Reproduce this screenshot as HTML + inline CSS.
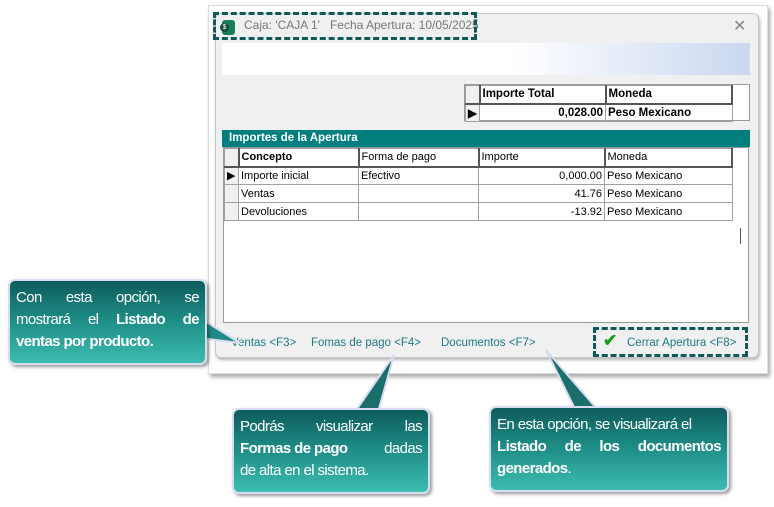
<!DOCTYPE html>
<html><head><style>
*{margin:0;padding:0;box-sizing:border-box}
body{width:774px;height:507px;background:#fff;position:relative;overflow:hidden;font-family:"Liberation Sans",Arial,sans-serif}
.abs{position:absolute}
.outer{left:208px;top:5px;width:560px;height:369px;background:#fff;border:1px solid #ddd;box-shadow:2px 3px 4px rgba(0,0,0,.35)}
.dlg{left:215px;top:13px;width:544px;height:345px;background:#f0f0f0;border:1px solid #c8c8c8;border-radius:6px;box-shadow:1px 2px 3px rgba(0,0,0,.3)}
.title{left:244px;top:18px;font-size:12px;color:#777}
.dash{border:3px dashed #0e5a5a}
.grad{left:222px;top:43px;width:528px;height:32px;background:linear-gradient(90deg,#fff 0%,#fff 55%,#c9d7ef 100%)}
table{border-collapse:collapse;font-size:11px}
td{border:1px solid #a0a0a0;height:18px;padding:0 2px;white-space:nowrap;overflow:hidden}
.hd td{border-bottom:2px solid #555;border-right:2px solid #555}
.ind{width:14px;background:#f0f0f0}
.r{text-align:right}
.call{color:#fff;font-size:15px;line-height:22px;padding:6px 6px;border-radius:7px;background:linear-gradient(180deg,#0d5c5c 0%,#1f8f88 50%,#3dbcb0 100%);border:2px solid #d8dcf0;box-shadow:2px 2px 3px rgba(0,0,0,.4);letter-spacing:-0.6px}
.call div{white-space:nowrap;display:flex;justify-content:space-between}
.call div.l{justify-content:flex-start}
.lk{font-size:11.5px;color:#1a7a86;top:337px}
</style></head><body>
<div class="abs outer"></div>
<div class="abs dlg"></div>
<div class="abs" style="left:222px;top:20px;width:13px;height:15px;background:#16805a;border-radius:3px"></div>
<div class="abs" style="left:220px;top:23px;width:9px;height:9px;background:#0b4d3a;border-radius:50%;color:#fff;font-size:7px;text-align:center;line-height:9px">$</div>
<div class="abs title">Caja: 'CAJA 1' &nbsp; Fecha Apertura: 10/05/2025</div>
<div class="abs dash" style="left:213px;top:12px;width:264px;height:28px"></div>
<div class="abs" style="left:733px;top:16px;font-size:16px;color:#888">✕</div>
<div class="abs grad"></div>
<div class="abs" style="left:464px;top:84px;width:286px;height:37px;background:#fff;border:1px solid #999"></div>
<table class="abs" style="left:465px;top:85px;width:268px;font-weight:bold;font-size:11.5px">
<tr class="hd"><td class="ind"></td><td style="width:126px">Importe Total</td><td>Moneda</td></tr>
<tr><td class="ind">▶</td><td class="r">0,028.00</td><td>Peso Mexicano</td></tr>
</table>
<div class="abs" style="left:222px;top:130px;width:528px;height:17px;background:#017f7f;color:#fff;font-size:11.5px;font-weight:bold;padding:2px 7px 0">Importes de la Apertura</div>
<div class="abs" style="left:223px;top:147px;width:526px;height:176px;background:#fff;border:1px solid #999"></div>
<div class="abs" style="left:740px;top:228px;width:1px;height:16px;background:#555"></div>
<table class="abs" style="left:224px;top:148px;width:509px">
<tr class="hd"><td class="ind"></td><td style="width:120px;font-weight:bold">Concepto</td><td style="width:120px">Forma de pago</td><td style="width:126px">Importe</td><td>Moneda</td></tr>
<tr><td class="ind">▶</td><td>Importe inicial</td><td>Efectivo</td><td class="r">0,000.00</td><td>Peso Mexicano</td></tr>
<tr><td class="ind"></td><td>Ventas</td><td></td><td class="r">41.76</td><td>Peso Mexicano</td></tr>
<tr><td class="ind"></td><td>Devoluciones</td><td></td><td class="r">-13.92</td><td>Peso Mexicano</td></tr>
</table>
<div class="abs lk" style="left:231px">Ventas &lt;F3&gt;</div>
<div class="abs lk" style="left:311px">Fomas de pago &lt;F4&gt;</div>
<div class="abs lk" style="left:441px">Documentos &lt;F7&gt;</div>
<div class="abs dash" style="left:593px;top:327px;width:155px;height:30px"></div>
<div class="abs" style="left:603px;top:331px;font-size:17px;color:#1a9a1a;font-weight:bold">✔</div>
<div class="abs lk" style="left:627px">Cerrar Apertura &lt;F8&gt;</div>
<svg class="abs" style="left:0;top:0" width="774" height="507">
<polygon points="200,318 240,343 200,338" fill="#1f8a84" stroke="#d8dcf0" stroke-width="2"/>
<polygon points="355,412 394,355 378,412" fill="#1a6f6c" stroke="#d8dcf0" stroke-width="2"/>
<polygon points="575,409 546,350 597,409" fill="#1a6f6c" stroke="#d8dcf0" stroke-width="2"/>
</svg>
<div class="abs call" style="left:8px;top:279px;width:199px;height:86px">
<div><span>Con</span><span>esta</span><span>opción,</span><span>se</span></div>
<div><span>mostrará</span><span>el</span><b>Listado</b><b>de</b></div>
<div class="l"><b>ventas por producto.</b></div></div>
<div class="abs call" style="left:232px;top:408px;width:198px;height:86px">
<div><span>Podrás</span><span>visualizar</span><span>las</span></div>
<div><b>Formas de pago</b><span>dadas</span></div>
<div class="l">de alta en el sistema.</div></div>
<div class="abs call" style="left:489px;top:406px;width:240px;height:86px">
<div><span>En esta opción, se visualizará el</span></div>
<div><b>Listado</b><b>de</b><b>los</b><b>documentos</b></div>
<div class="l"><b>generados</b>.</div></div>
</body></html>
